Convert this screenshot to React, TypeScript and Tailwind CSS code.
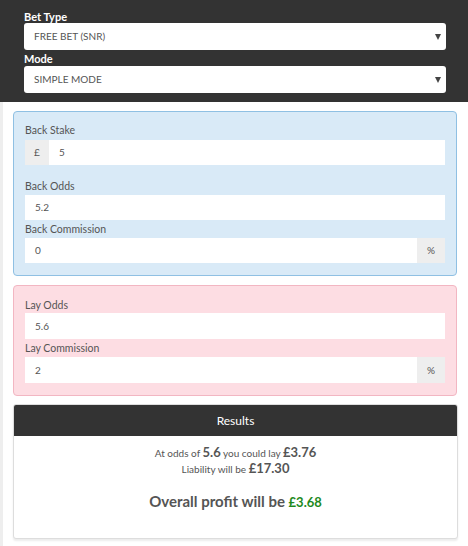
import React from 'react';

function SelectBox({ label, value, gap }: { label: string; value: string; gap: string }) {
  return (
    <div>
      <label className={`block text-[11px] font-bold text-white leading-[13px] ${gap}`}>{label}</label>
      <div className="relative h-[27px] bg-white rounded-[3px] flex items-center pl-[10px] text-[10px] text-[#555] uppercase">
        {value}
        <span className="absolute right-[5px] top-[11px] w-0 h-0 border-l-[3px] border-r-[3px] border-t-[6px] border-l-transparent border-r-transparent border-t-[#444]" />
      </div>
    </div>
  );
}

function Field({
  label,
  value,
  prefix,
  suffix,
  gap,
  h = 'h-[25px]',
}: {
  label: string;
  value: string;
  prefix?: string;
  suffix?: string;
  gap: string;
  h?: string;
}) {
  return (
    <div>
      <label className={`block text-[10.5px] text-[#555] leading-[14px] ${gap}`}>{label}</label>
      <div className={`flex ${h}`}>
        {prefix && (
          <span className="w-[24px] bg-[#eee] flex items-center justify-center text-[10px] text-[#555]">{prefix}</span>
        )}
        <div className="flex-1 bg-white flex items-center pl-[10px] text-[10px] text-[#555]">{value}</div>
        {suffix && (
          <span className="w-[28px] bg-[#eee] flex items-center justify-center text-[10px] text-[#555]">{suffix}</span>
        )}
      </div>
    </div>
  );
}

export default function App() {
  return (
    <div className="w-[468px] h-[546px] bg-white border-l-[3px] border-[#eee]" style={{ fontFamily: 'Lato, "Open Sans", sans-serif' }}>
      {/* Settings */}
      <div className="bg-[#333] h-[102px] -ml-[3px] pl-[24px] pr-[22px] pt-[10px] flex flex-col gap-[2px]">
        <SelectBox label="Bet Type" value="Free Bet (SNR)" gap="mb-0" />
        <SelectBox label="Mode" value="Simple Mode" gap="mb-[1px]" />
      </div>

      <div className="pl-[10px] pr-[10px] pt-[9px]">
        {/* Back */}
        <div className="w-[444px] bg-[#d9eaf7] border border-[#8fc0e3] rounded-[4px] px-[11px] pt-[11px] pb-[12px]">
          <Field label="Back Stake" value="5" prefix="£" gap="mb-[3px]" />
          <div className="h-[14px]" />
          <Field label="Back Odds" value="5.2" gap="mb-[2px]" />
          <div className="h-[2px]" />
          <Field label="Back Commission" value="0" suffix="%" gap="mb-[2px]" />
        </div>

        {/* Lay */}
        <div className="mt-[9px] w-[444px] bg-[#fddde3] border border-[#f2b6c2] rounded-[4px] px-[11px] pt-[12px] pb-[12px]">
          <Field label="Lay Odds" value="5.6" gap="mb-[1px]" h="h-[26px]" />
          <div className="h-[2px]" />
          <Field label="Lay Commission" value="2" suffix="%" gap="mb-[2px]" h="h-[26px]" />
        </div>

        {/* Results */}
        <div className="mt-[8px] w-[445px] border border-[#ddd] rounded-[3px] shadow-[0_2px_2px_rgba(0,0,0,0.08)] bg-white">
          <div className="bg-[#333] h-[31px] rounded-t-[2px] flex items-center justify-center text-white text-[12px]">Results</div>
          <div className="h-[102px] flex flex-col items-center pt-[9px] text-[#555]">
            <p className="text-[10px] leading-[15px]">
              At odds of <span className="text-[13px] font-bold">5.6</span> you could lay{' '}
              <span className="text-[13px] font-bold">£3.76</span>
            </p>
            <p className="text-[10px] leading-[15px]">
              Liability will be <span className="text-[13px] font-bold">£17.30</span>
            </p>
            <p className="mt-[13px] text-[15px] font-bold">
              Overall profit will be <span className="text-[13px] text-[#1e8a1e]">£3.68</span>
            </p>
          </div>
        </div>
      </div>
    </div>
  );
}
